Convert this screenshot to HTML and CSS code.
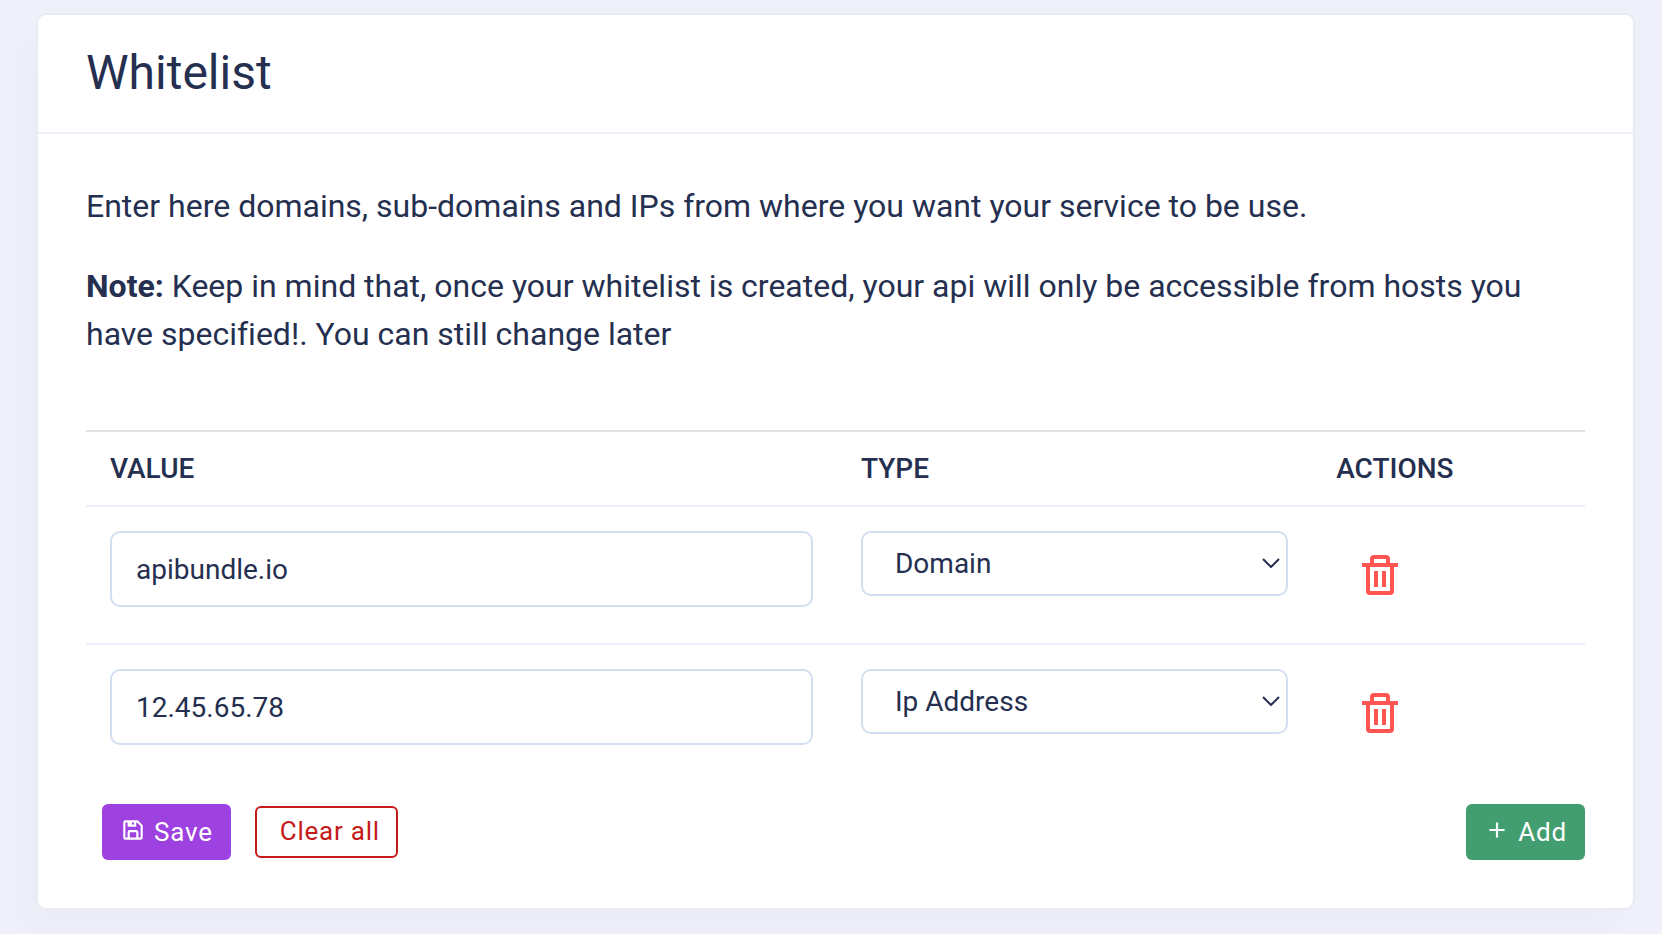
FILE: index.html
```html
<!DOCTYPE html>
<html lang="en">
<head>
  <meta charset="UTF-8">
  <meta name="viewport" content="width=device-width, initial-scale=1.0">
  <title>Whitelist</title>
  <link rel="stylesheet" href="styles.css">
</head>
<body>

  <main class="card">
    <header class="card-header">
      <h1 class="card-title">Whitelist</h1>
    </header>

    <form class="card-body">
      <p>Enter here domains, sub-domains and IPs from where you want your service to be use.</p>
      <p><strong>Note:</strong> Keep in mind that, once your whitelist is created, your api will only be accessible from hosts you have specified!. You can still change later</p>

      <table class="table">
        <thead>
          <tr>
            <th class="col-value">Value</th>
            <th class="col-type">Type</th>
            <th>Actions</th>
          </tr>
        </thead>
        <tbody>
          <tr>
            <td><input class="form-control" type="text" aria-label="Value" value="apibundle.io"></td>
            <td>
              <div class="select-wrap">
                <select class="form-select" aria-label="Type">
                  <option selected>Domain</option>
                  <option>Ip Address</option>
                </select>
                <svg class="chevron" viewBox="0 0 18 10" aria-hidden="true"><path d="M1 1l8 8 8-8"/></svg>
              </div>
            </td>
            <td>
              <button class="btn-icon" type="button" aria-label="Delete">
                <svg viewBox="0 0 24 24"><path d="M5 20a2 2 0 0 0 2 2h10a2 2 0 0 0 2-2V8h2V6h-4V4a2 2 0 0 0-2-2H9a2 2 0 0 0-2 2v2H3v2h2zM9 4h6v2H9zM8 8h9v12H7V8z"/><path d="M9 10h2v8H9zm4 0h2v8h-2z"/></svg>
              </button>
            </td>
          </tr>
          <tr>
            <td><input class="form-control" type="text" aria-label="Value" value="12.45.65.78"></td>
            <td>
              <div class="select-wrap">
                <select class="form-select" aria-label="Type">
                  <option>Domain</option>
                  <option selected>Ip Address</option>
                </select>
                <svg class="chevron" viewBox="0 0 18 10" aria-hidden="true"><path d="M1 1l8 8 8-8"/></svg>
              </div>
            </td>
            <td>
              <button class="btn-icon" type="button" aria-label="Delete">
                <svg viewBox="0 0 24 24"><path d="M5 20a2 2 0 0 0 2 2h10a2 2 0 0 0 2-2V8h2V6h-4V4a2 2 0 0 0-2-2H9a2 2 0 0 0-2 2v2H3v2h2zM9 4h6v2H9zM8 8h9v12H7V8z"/><path d="M9 10h2v8H9zm4 0h2v8h-2z"/></svg>
              </button>
            </td>
          </tr>
        </tbody>
      </table>

      <div class="actions">
        <button class="btn btn-save" type="submit">
          <svg viewBox="0 0 24 24" aria-hidden="true"><path d="M5 21h14a2 2 0 0 0 2-2V8a1 1 0 0 0-.29-.71l-4-4A1 1 0 0 0 16 3H5a2 2 0 0 0-2 2v14a2 2 0 0 0 2 2zm10-2H9v-5h6zM13 7h-2V5h2zM5 5h2v4h8V5h.59L19 8.41V19h-2v-5a2 2 0 0 0-2-2H9a2 2 0 0 0-2 2v5H5z"/></svg>
          <span>Save</span>
        </button>
        <button class="btn btn-clear" type="button">Clear all</button>
        <button class="btn btn-add" type="button">
          <svg viewBox="0 0 24 24" aria-hidden="true"><path d="M19 11h-6V5h-2v6H5v2h6v6h2v-6h6z"/></svg>
          <span>Add</span>
        </button>
      </div>
    </form>
  </main>

</body>
</html>
```
FILE: styles.css
```css
* {
  box-sizing: border-box;
}

body {
  margin: 0;
  padding: 13px 27px 24px 36px;
  background: #f0f0fa;
  color: #252f50;
  font-family: Roboto, sans-serif;
  font-size: 32px;
  font-variant-ligatures: none;
  line-height: 48px;
}

.card {
  background: #fff;
  border: 2px solid #e8eaf4;
  border-radius: 10px;
  box-shadow: -16px 24px 36px rgba(25, 42, 70, 0.02);
}

.card-header {
  padding: 34px 48px 35px;
  border-bottom: 2px solid #edf0fb;
}

.card-title {
  margin: 0;
  font-size: 48px;
  font-weight: 400;
  line-height: 48px;
}

.card-body {
  padding: 48px;
}

p {
  margin: 0 0 32px;
}

/* table */
.table {
  width: 100%;
  margin-top: 72px;
  border-top: 2px solid #dee2e6;
  border-spacing: 0;
  table-layout: fixed;
}

.col-value {
  width: 50.1%;
}

.col-type {
  width: 31.7%;
}

th {
  padding: 17px 24px 16px;
  font-size: 28px;
  font-weight: 500;
  line-height: 40px;
  text-align: left;
  text-transform: uppercase;
}

td {
  padding: 24px 24px 36px;
  border-top: 2px solid #eaeff9;
  vertical-align: top;
}

.form-control,
.form-select {
  display: block;
  width: 100%;
  border: 2px solid #d3dff0;
  border-radius: 10px;
  background: #fff;
  color: inherit;
  font-family: inherit;
  font-size: 28px;
}

.form-control {
  height: 76px;
  padding: 0 24px;
}

.select-wrap {
  position: relative;
}

.form-select {
  height: 65px;
  padding: 0 32px;
  appearance: none;
}

.chevron {
  position: absolute;
  top: 27px;
  right: 8px;
  width: 18px;
  height: 10px;
  fill: none;
  stroke: #252f50;
  stroke-width: 2;
  pointer-events: none;
}

.btn-icon {
  display: block;
  padding: 20px 20px 0;
  border: 0;
  background: none;
  cursor: pointer;
}

.btn-icon svg {
  display: block;
  width: 48px;
  height: 48px;
  fill: #ff5653;
}

/* buttons */
.actions {
  display: flex;
  align-items: center;
  gap: 24px;
  margin-top: 23px;
  padding-left: 16px;
}

.btn {
  display: flex;
  align-items: center;
  gap: 8px;
  padding: 8px 18px;
  border: 0;
  border-radius: 6px;
  color: #fff;
  font-family: inherit;
  font-size: 26px;
  line-height: 40px;
  letter-spacing: 0.03em;
  cursor: pointer;
}

.btn svg {
  width: 26px;
  height: 26px;
  margin-bottom: 4px;
  fill: #fff;
}

.btn-save {
  background: #9d41e0;
}

.btn-clear {
  padding: 3px 16px 5px 23px;
  border: 2px solid #c41a1a;
  background: #fff;
  color: #c41a1a;
}

.btn-add {
  margin-left: auto;
  background: #429e70;
}
```
